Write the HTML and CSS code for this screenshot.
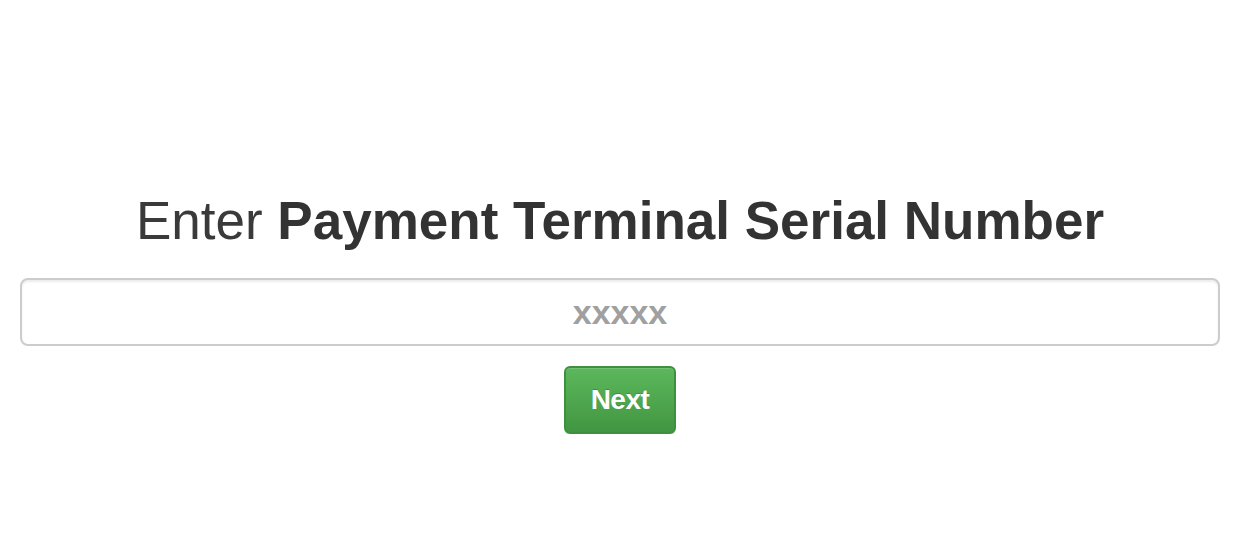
FILE: index.html
```html
<!DOCTYPE html>
<html>
<head>
<meta charset="utf-8">
<link rel="stylesheet" href="styles.css">
</head>
<body>
<main class="page">
  <h1 class="title"><span class="light">Enter</span> <strong>Payment Terminal Serial Number</strong></h1>
  <input class="serial" type="text" placeholder="xxxxx">
  <button class="next" type="button">Next</button>
</main>
</body>
</html>
```
FILE: styles.css
```css
html, body {
  margin: 0;
  padding: 0;
  background: #fff;
}
.page {
  display: flex;
  flex-direction: column;
  align-items: center;
  padding: 187px 22px 0 20px;
  font-family: "Liberation Sans", Arial, sans-serif;
  color: #333;
}
.title {
  margin: 0;
  font-size: 53px;
  line-height: 68px;
  font-weight: normal;
}
.title .light {
  color: #3a3a3a;
}
.title strong {
  font-weight: bold;
}
.serial {
  box-sizing: border-box;
  margin-top: 23px;
  width: 100%;
  height: 68px;
  border: 2px solid #ccc;
  border-radius: 8px;
  box-shadow: inset 0 2px 2px rgba(0,0,0,0.075);
  text-align: center;
  font-family: "Liberation Sans", Arial, sans-serif;
  font-size: 34px;
  font-weight: bold;
  color: #555;
  outline: none;
}
.serial::placeholder {
  color: #a0a0a0;
}
.next {
  margin-top: 20px;
  width: 112px;
  height: 68px;
  border: 2px solid #3e8f3e;
  border-radius: 6px;
  background: linear-gradient(to bottom, #5cb85c 0%, #419641 100%);
  color: #fff;
  font-family: "Liberation Sans", Arial, sans-serif;
  font-size: 28px;
  font-weight: bold;
  letter-spacing: -0.5px;
  text-shadow: 0 -1px 0 rgba(0,0,0,0.2);
  box-shadow: inset 0 1px 0 rgba(255,255,255,0.15), 0 1px 1px rgba(0,0,0,0.075);
  padding: 0;
}
```
